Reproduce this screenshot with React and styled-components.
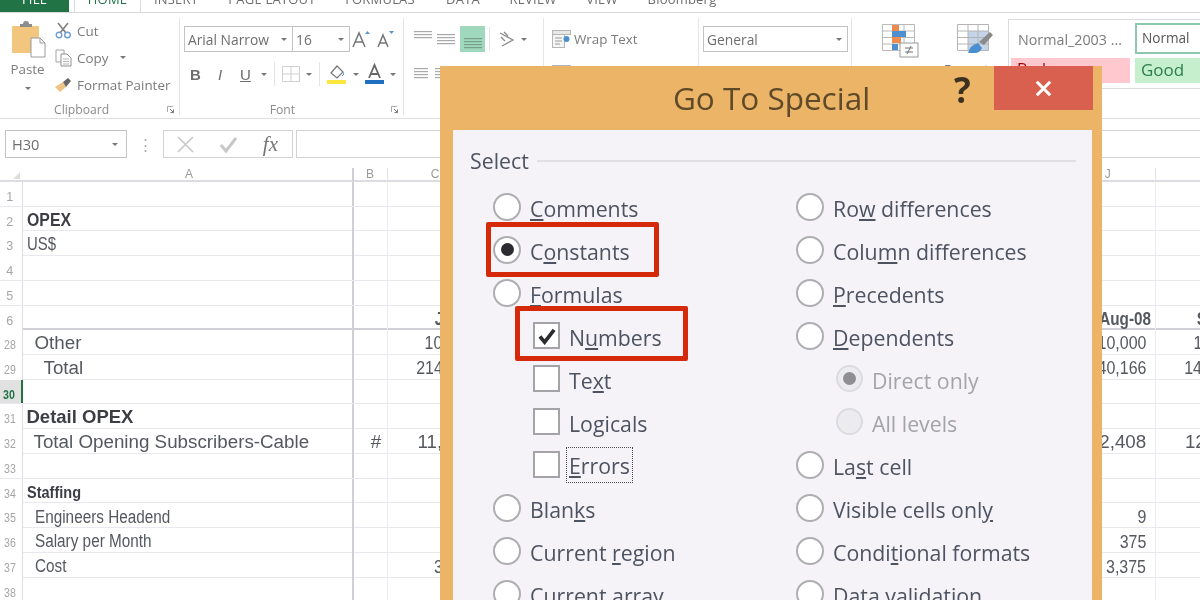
import styled, { createGlobalStyle } from 'styled-components';

const GlobalStyle = createGlobalStyle`
  html, body { margin: 0; padding: 0; background: #fff; }
  * { box-sizing: border-box; }
`;

const UI_FONT = '"Open Sans", "Noto Sans", sans-serif';
const SHEET_FONT = '"Liberation Sans", Arial, sans-serif';

const Page = styled.div`
  position: relative;
  width: 1200px;
  height: 600px;
  overflow: hidden;
  background: #fff;
  font-family: ${UI_FONT};
  filter: blur(0.55px);
`;

/* ---------- tabs ---------- */
const TabStrip = styled.div`
  display: flex;
  height: 13px;
  border-bottom: 1px solid #d9d9dc;
  overflow: hidden;
  font-size: 13px;
  letter-spacing: 0.2px;
  color: #6d6d6d;
`;
const FileTab = styled.div`
  width: 69px;
  height: 17px;
  margin: -5px 5px 0 0;
  background: #217346;
  color: #fff;
  text-align: center;
  line-height: 8px;
  flex: none;
`;
const Tab = styled.div`
  width: ${p => p.$w}px;
  flex: none;
  height: 18px;
  margin-top: -5px;
  text-align: center;
  line-height: 8px;
  white-space: nowrap;
  color: ${p => (p.$active ? '#217346' : 'inherit')};
  background: #fff;
  ${p => p.$active && 'border: 1px solid #d9d9dc; border-top: 0; border-bottom: 0;'}
`;

/* ---------- ribbon ---------- */
const Ribbon = styled.div`
  display: flex;
  height: 106px;
  border-bottom: 1px solid #dedee2;
  color: #7b7b7b;
  font-size: 13.4px;
`;
const Group = styled.div`
  width: ${p => p.$w}px;
  flex: none;
  display: flex;
  flex-direction: column;
  position: relative;
  padding: ${p => p.$pad || '0'};
  &:after {
    content: '';
    display: ${p => (p.$noLine ? 'none' : 'block')};
    position: absolute;
    right: 0;
    top: 5px;
    bottom: 3px;
    width: 1px;
    background: #e6e6ea;
  }
`;
const GroupBody = styled.div`
  flex: 1;
  display: flex;
  min-height: 0;
`;
const GroupLabel = styled.div`
  height: 18px;
  display: grid;
  grid-template-columns: 1fr auto 1.2fr;
  align-items: center;
  font-size: 12.2px;
  color: #8c8c8c;
  padding-right: 6px;
  span { grid-column: 2; }
  svg { grid-column: 3; justify-self: end; }
`;
const PasteCol = styled.div`
  width: 55px;
  padding-top: 8px;
  display: flex;
  flex-direction: column;
  align-items: center;
  line-height: 18px;
  svg { margin-bottom: 1px; }
`;
const SmallCol = styled.div`
  display: flex;
  flex-direction: column;
  padding-top: 4px;
`;
const SmallItem = styled.div`
  height: ${p => p.$h || 27}px;
  display: flex;
  align-items: center;
  gap: ${p => p.$gap || 5}px;
  white-space: nowrap;
`;
const Stack = styled.div`
  display: flex;
  flex-direction: column;
  padding-top: 13px;
  gap: 10px;
`;
const ToolRow = styled.div`
  display: flex;
  align-items: center;
  height: ${p => p.$h || 26}px;
`;
const Tool = styled.div`
  width: ${p => p.$w}px;
  height: ${p => p.$h || 24}px;
  flex: none;
  display: flex;
  align-items: center;
  justify-content: center;
  margin-left: ${p => p.$ml || 0}px;
  background: ${p => (p.$on ? '#9fd8bd' : 'transparent')};
  color: #6d6d6d;
  font-family: ${SHEET_FONT};
  font-size: 15px;
  font-weight: ${p => (p.$bold ? 700 : 400)};
  font-style: ${p => (p.$italic ? 'italic' : 'normal')};
  text-decoration: ${p => (p.$under ? 'underline' : 'none')};
`;
const Caret = styled.i`
  display: block;
  width: 0;
  height: 0;
  margin-top: ${p => p.$mt || 0}px;
  margin-left: ${p => p.$ml || 0}px;
  border-left: 3px solid transparent;
  border-right: 3px solid transparent;
  border-top: 3px solid #777;
`;
const Sep = styled.div`
  width: 1px;
  height: 24px;
  background: #e4e4e8;
  flex: none;
  margin: 0 ${p => p.$m || 6}px;
`;
const Combo = styled.div`
  width: ${p => p.$w}px;
  height: 26px;
  flex: none;
  border: 1px solid #c3c3c7;
  background: #fff;
  display: flex;
  align-items: center;
  justify-content: space-between;
  padding: 0 5px 0 3px;
  font-size: 13.8px;
  color: #6e6e6e;
  & + & { margin-left: -1px; }
`;
const BigTool = styled.div`
  width: ${p => p.$w}px;
  flex: none;
  display: flex;
  flex-direction: column;
  align-items: center;
  padding-top: 11px;
  gap: 6px;
  white-space: nowrap;
`;
const Gallery = styled.div`
  width: 210px;
  flex: none;
  height: 70px;
  margin-top: 6px;
  border: 1px solid #dcdce0;
  border-right: 0;
  display: grid;
  grid-template-columns: 124px 86px;
  grid-template-rows: 35px 25px;
  padding: 3px 0 0 2px;
`;
const StyleCell = styled.div`
  display: flex;
  align-items: center;
  padding: 0 0 ${p => (p.$boxed ? 2 : 3)}px ${p => p.$pl || 6}px;
  font-size: ${p => p.$fs || 14.3}px;
  margin-right: 5px;
  background: ${p => p.$bg || 'transparent'};
  color: ${p => p.$color || '#7b7b7b'};
  border: ${p => (p.$boxed ? '2px solid #8fc7ae' : '0')};
  margin-bottom: ${p => (p.$boxed ? '4px' : '0')};
  white-space: nowrap;
`;

/* ---------- formula bar ---------- */
const FormulaBar = styled.div`
  display: flex;
  align-items: center;
  height: 28px;
  margin-top: 11px;
  padding-left: 5px;
`;
const NameBox = styled(Combo)`
  width: 122px;
  height: 28px;
  padding: 0 8px 0 6px;
  font-size: 14.6px;
`;
const Dots = styled.div`
  width: 36px;
  text-align: center;
  color: #a9a9a9;
  font-size: 15px;
  line-height: 1;
  flex: none;
`;
const FxBox = styled.div`
  width: 130px;
  height: 28px;
  flex: none;
  border: 1px solid #d3d3d7;
  display: flex;
  align-items: center;
  justify-content: space-between;
  padding: 0 14px 0 12px;
`;
const FxText = styled.span`
  font-family: "Liberation Serif", serif;
  font-style: italic;
  font-size: 21px;
  color: #757575;
`;
const FormulaInput = styled.div`
  flex: 1;
  height: 28px;
  margin-left: 3px;
  border: 1px solid #d3d3d7;
  border-right: 0;
`;

/* ---------- sheet ---------- */
const Sheet = styled.div`
  margin-top: 10px;
`;
const COLUMNS = '22.5px 331px 34px repeat(9, 96.1px)';
const ColHeader = styled.div`
  display: grid;
  grid-template-columns: ${COLUMNS};
  height: 14px;
  border-bottom: 2px solid #dcdce2;
  font-size: 12px;
  line-height: 13px;
  color: #9a9a9a;
  font-family: ${SHEET_FONT};
`;
const ColName = styled.div`
  text-align: center;
  padding-left: ${p => (p.$strong ? 4 : 0)}px;
  border-right: 1px solid ${p => (p.$strong ? '#cfcfd6' : '#e4e4ea')};
  ${p => p.$strong && 'border-right-width: 2px;'}
`;
const Row = styled.div`
  display: grid;
  grid-template-columns: ${COLUMNS};
  height: 24.72px;
  border-bottom: ${p => (p.$frozen ? '2px solid #cfcfd5' : '1px solid #e8e8ee')};
`;
const RowNo = styled.div`
  font-family: ${SHEET_FONT};
  font-size: 12.5px;
  color: ${p => (p.$sel ? '#217346' : '#a6a6a6')};
  font-weight: ${p => (p.$sel ? 700 : 400)};
  background: ${p => (p.$sel ? '#e1e1e1' : '#fff')};
  border-right: ${p => (p.$sel ? '2px solid #217346' : '1px solid #dcdce2')};
  text-align: center;
  padding-right: 2px;
  line-height: 31px;
  overflow: hidden;
`;
const Cell = styled.div`
  font-family: ${SHEET_FONT};
  font-size: ${p => p.$fs || 18.8}px;
  font-weight: ${p => (p.$bold ? 700 : 400)};
  color: ${p => p.$color || '#55585f'};
  text-align: ${p => p.$align || 'left'};
  padding: 0 ${p => p.$pr || 0}px 0 ${p => p.$pl || 0}px;
  white-space: nowrap;
  line-height: ${p => p.$lh || 27}px;
  border-right: 1px solid ${p => (p.$strong ? '#cfcfd6' : '#ebebf1')};
  ${p => p.$strong && 'border-right-width: 2px;'}
`;
/* the sheet uses Arial Narrow, which is not installed: squeeze the Arial metrics */
const Narrow = styled.span`
  display: inline-block;
  transform: scaleX(${p => p.$sx || 0.85});
  transform-origin: ${p => p.$origin || 'left'} center;
`;

/* ---------- dialog ---------- */
const Dialog = styled.div`
  position: absolute;
  left: 440px;
  top: 66px;
  width: 662px;
  height: 600px;
  background: #ecb466;
  padding: 64px 10px 0 13px;
`;
const TitleBar = styled.div`
  position: absolute;
  left: 0;
  right: 0;
  top: 0;
  height: 64px;
  text-align: center;
  padding-left: 1px;
  font-size: 31.5px;
  line-height: 63px;
  color: #5e4a29;
`;
const HelpMark = styled.div`
  position: absolute;
  left: 514px;
  top: 3px;
  font-size: 35px;
  line-height: 42px;
  font-weight: 700;
  color: #3c3020;
`;
const CloseBtn = styled.div`
  position: absolute;
  left: 554px;
  top: 0;
  width: 99px;
  height: 44px;
  background: #d9604f;
  display: flex;
  align-items: center;
  justify-content: center;
`;
const Panel = styled.div`
  height: 100%;
  background: #f5f3f8;
  padding: 16px 16px 0 17px;
  color: #4e5361;
  font-size: 21.3px;
`;
const Legend = styled.div`
  display: flex;
  align-items: center;
  gap: 8px;
  line-height: 30px;
  &:after {
    content: '';
    flex: 1;
    height: 2px;
    background: #e0dfe4;
  }
`;
const Columns = styled.div`
  display: grid;
  grid-template-columns: 303px 1fr;
  padding: 9px 0 0 23px;
`;
const Option = styled.div`
  position: relative;
  display: flex;
  align-items: center;
  height: 43px;
  padding-left: ${p => (p.$indent ? 40 : 0)}px;
  gap: 9px;
  white-space: nowrap;
  color: ${p => (p.$off ? '#a3a4a8' : 'inherit')};
  span:last-of-type { padding-top: 3px; }
  u { text-underline-offset: 2px; text-decoration-thickness: 2px; }
`;
const Radio = styled.i`
  width: ${p => (p.$off ? 27 : 28)}px;
  height: ${p => (p.$off ? 27 : 28)}px;
  flex: none;
  border-radius: 50%;
  border: 2px solid ${p => (p.$off ? '#dcdcdf' : '#aeaeb2')};
  background: ${p => (p.$off ? '#ececee' : '#fff')};
  display: flex;
  align-items: center;
  justify-content: center;
  &:after {
    content: '';
    display: ${p => (p.$checked ? 'block' : 'none')};
    width: 13px;
    height: 13px;
    border-radius: 50%;
    background: ${p => (p.$off ? '#8f8f93' : '#2b2b30')};
  }
`;
const Check = styled.i`
  width: 27px;
  height: 27px;
  flex: none;
  border: 2px solid #a3a3a8;
  background: #fff;
  display: flex;
  align-items: center;
  justify-content: center;
`;
const Focus = styled.span`
  outline: 1.5px dotted #4a4a52;
  padding: 2px 2px 2px 2px;
  margin-left: -2px;
  line-height: 29px;
`;
const Mark = styled.div`
  position: absolute;
  left: ${p => p.$l}px;
  top: ${p => p.$t}px;
  width: 173px;
  height: 55px;
  border: 5px solid #d42a0a;
  border-radius: 2px;
`;

/* ---------- drawn icons ---------- */
const PasteIcon = () => (
  <svg width="36" height="38" viewBox="0 0 36 38">
    <rect x="2" y="5" width="27" height="27" rx="1" fill="#f2c67f" />
    <path d="M10 6 V3 H13 A3 3 0 0 1 19 3 H22 V6 Z" fill="#8c8c8c" />
    <path d="M21 17 H30 L35 22 V36 H21 Z" fill="#fff" stroke="#9b9b9b" />
    <path d="M30 17 V22 H35" fill="none" stroke="#9b9b9b" />
  </svg>
);
const ScissorsIcon = () => (
  <svg width="17" height="17" viewBox="0 0 17 17">
    <path d="M3 1 L11 11 M13 1 L5 11" stroke="#808080" strokeWidth="1.6" fill="none" />
    <circle cx="4" cy="13" r="2.8" fill="none" stroke="#6f9ed0" strokeWidth="1.4" />
    <circle cx="12.5" cy="13" r="2.8" fill="none" stroke="#6f9ed0" strokeWidth="1.4" />
  </svg>
);
const CopyIcon = () => (
  <svg width="17" height="18" viewBox="0 0 17 18">
    <path d="M1 1 H9 V13 H1 Z" fill="#fff" stroke="#a5a5a5" />
    <path d="M6 5 H12 L16 9 V17 H6 Z" fill="#fff" stroke="#909090" />
    <path d="M8 10 H14 M8 12.5 H14 M8 15 H14" stroke="#b5b5b5" />
  </svg>
);
const PainterIcon = () => (
  <svg width="17" height="16" viewBox="0 0 17 16">
    <path d="M0 10 L8 5 L11 10 L5 15 Z" fill="#edc386" />
    <path d="M8 5 L13 1 L16 4 L11 10 Z" fill="#666" />
  </svg>
);
const SizeIcon = ({ size, dir }) => (
  <svg width="24" height="22" viewBox="0 0 24 22">
    <path d={size === 'big'
      ? 'M3 19 L9 5 L15 19 M5.5 14 H12.5'
      : 'M4 19 L9 7 L14 19 M6 15 H12'} fill="none" stroke="#767676" strokeWidth="1.5" />
    <path d={dir === 'up' ? 'M15 6 L17.5 3 L20 6 Z' : 'M15 3 L17.5 6 L20 3 Z'} fill="#5b94cf" />
  </svg>
);
const BorderIcon = () => (
  <svg width="18" height="16" viewBox="0 0 18 16">
    <path d="M.5.5 H17.5 V15.5 H.5 Z M9 .5 V15.5 M.5 8 H17.5" fill="none" stroke="#cfcfcf" />
  </svg>
);
const FillIcon = () => (
  <svg width="21" height="22" viewBox="0 0 21 22">
    <path d="M5 10 L11 3 L17 9 L11 15 Z" fill="#fff" stroke="#777" strokeWidth="1.2" />
    <path d="M16 8 L18 11 L16 13" fill="none" stroke="#5b94cf" />
    <rect x="1" y="17" width="19" height="4" fill="#fbe83f" />
  </svg>
);
const FontColorIcon = () => (
  <svg width="20" height="22" viewBox="0 0 20 22">
    <path d="M4 15 L9.5 2 L15 15 M6 11 H13" fill="none" stroke="#676767" strokeWidth="1.8" />
    <rect x="0" y="17" width="19" height="4" fill="#1f6fc0" />
  </svg>
);
const Lines = ({ w = 18, y, color = '#a9a9a9', ys = [0, 3, 6, 9] }) => (
  <svg width={w} height="22" viewBox={`0 0 ${w} 22`}>
    {ys.map(d => <rect key={d} x="0" y={y + d} width={w} height="1.2" fill={color} />)}
  </svg>
);
const OrientIcon = () => (
  <svg width="19" height="17" viewBox="0 0 19 17">
    <path d="M2 2 L15 9 L4 15 M6 1 L10 5 M3 6 L7 10" fill="none" stroke="#8a8a8a" strokeWidth="1.3" />
  </svg>
);
const WrapIcon = () => (
  <svg width="20" height="18" viewBox="0 0 20 18">
    <rect x=".5" y=".5" width="12" height="17" fill="#f6f6f6" stroke="#b5b5b5" />
    <rect x=".5" y=".5" width="18" height="4" fill="#e8e8e8" stroke="#b5b5b5" />
    <path d="M3 8 H10 M3 11 H10 M3 14 H8" stroke="#9a9a9a" />
    <circle cx="14.5" cy="9" r="3" fill="#4a90d0" />
  </svg>
);
const CondIcon = () => (
  <svg width="37" height="34" viewBox="0 0 37 34">
    <path d="M.5.5 H32.5 V26.5 H.5 Z M11 .5 V26.5 M22 .5 V26.5 M.5 7 H32.5 M.5 13.5 H32.5 M.5 20 H32.5" fill="#fff" stroke="#b9b9b9" />
    <rect x="10" y="1" width="7" height="6" fill="#ee8a4b" />
    <rect x="10" y="7" width="14" height="6" fill="#4d8fd0" />
    <rect x="10" y="13" width="9" height="6" fill="#ee8a4b" />
    <rect x="10" y="20" width="6" height="6" fill="#4d8fd0" />
    <rect x="18" y="19" width="18" height="14" fill="#fff" stroke="#9a9a9a" />
    <path d="M23 24 H31 M23 28 H31 M29 22 L25 30" stroke="#707070" fill="none" />
  </svg>
);
const TableIcon = () => (
  <svg width="37" height="30" viewBox="0 0 37 30">
    <path d="M.5.5 H31.5 V26.5 H.5 Z" fill="#fff" stroke="#b4b4b4" />
    <rect x="11" y="7" width="20" height="19" fill="#c4d5ea" />
    <path d="M11 .5 V26.5 M21 .5 V26.5 M.5 7 H31.5 M.5 13.5 H31.5 M.5 20 H31.5" stroke="#b4b4b4" fill="none" />
    <path d="M22 18 L33 8 L36 11 L27 21 Z" fill="#8a8a8a" />
    <path d="M11 29 Q13 21 21 19 L25 24 Q23 29 18 29 Z" fill="#4a90d0" />
  </svg>
);
const Launcher = () => (
  <svg width="7" height="7" viewBox="0 0 7 7">
    <path d="M.5 6 V.5 H6" fill="none" stroke="#aaa" />
    <path d="M3 3 L6.5 6.5 M6.5 3.5 V6.5 H3.5" fill="none" stroke="#777" />
  </svg>
);
const CrossIcon = ({ size = 19, color = '#c8c8c8', width = 1.6 }) => (
  <svg width={size} height={size} viewBox="0 0 19 19">
    <path d="M2 2 L17 17 M17 2 L2 17" stroke={color} strokeWidth={width} fill="none" />
  </svg>
);
const CheckIcon = ({ size = 19, color = '#c8c8c8', width = 3 }) => (
  <svg width={size} height={size} viewBox="0 0 19 19">
    <path d="M2 10 L7 16 L17 3" stroke={color} strokeWidth={width} fill="none" />
  </svg>
);
const CornerMark = styled.svg`
  display: block;
  margin: 4px 0 0 13px;
`;

/* ---------- data ---------- */
const TABS = [
  ['INSERT', 70], ['PAGE LAYOUT', 122], ['FORMULAS', 94], ['DATA', 72],
  ['REVIEW', 68], ['VIEW', 70], ['Bloomberg', 90],
];

const ROWS = [
  { n: '1' },
  { n: '2', a: 'OPEX', bold: true, narrow: 0.88, fs: 18, lh: 26, pl: 4 },
  { n: '3', a: 'US$', narrow: 0.83, fs: 18, pl: 4 },
  { n: '4' },
  { n: '5' },
  { n: '6', frozen: true, head: true, c: 'Jul-08', j: 'Aug-08', k: 'Sep-08' },
  { n: '28', a: 'Other', pl: 12, lh: 25.5, squeeze: true, c: '10,000', j: '10,000', k: '10,000' },
  { n: '29', a: 'Total', pl: 21, lh: 25.5, squeeze: true, c: '214,166', j: '40,166', k: '140,166' },
  { n: '30', sel: true },
  { n: '31', a: 'Detail OPEX', bold: true, fs: 18.5, lh: 25, pl: 4 },
  { n: '32', a: 'Total Opening Subscribers-Cable', pl: 11, lh: 26, b: '#', c: '11,408', j: '12,408', k: '12,408' },
  { n: '33' },
  { n: '34', a: 'Staffing', bold: true, narrow: 0.88, fs: 16.5, pl: 4 },
  { n: '35', a: 'Engineers Headend', narrow: 0.85, fs: 18, lh: 28, pl: 12, squeeze: true, j: '9' },
  { n: '36', a: 'Salary per Month', narrow: 0.85, fs: 18, pl: 12, squeeze: true, j: '375' },
  { n: '37', a: 'Cost', narrow: 0.85, fs: 18, pl: 12, squeeze: true, c: '3,375', j: '3,375' },
  { n: '38' },
];

const Amount = ({ row, value }) => (
  <Cell $align="right" $bold={row.head} $pr={row.head ? 4 : 9} $lh={row.lh} $fs={row.head ? 18 : undefined}>
    {value && (row.squeeze || row.head
      ? <Narrow $origin="right">{value}</Narrow>
      : value)}
  </Cell>
);

const Rows = () => ROWS.map(r => (
  <Row key={r.n} $frozen={r.frozen}>
    <RowNo $sel={r.sel}><Narrow $origin="center" $sx={r.n.length > 1 ? 0.85 : 1}>{r.n}</Narrow></RowNo>
    <Cell $strong $bold={r.bold} $pl={r.pl} $fs={r.fs} $lh={r.lh} $color={r.bold ? '#3c3e44' : undefined}>
      {r.narrow ? <Narrow $sx={r.narrow}>{r.a}</Narrow> : r.a}
    </Cell>
    <Cell $align="center" $pl={12} $lh={r.lh}>{r.b}</Cell>
    <Amount row={r} value={r.c} />
    <Cell /><Cell /><Cell /><Cell /><Cell /><Cell />
    <Amount row={r} value={r.j} />
    <Amount row={r} value={r.k} />
  </Row>
));

const COLS = ['A', 'B', 'C', 'D', 'E', 'F', 'G', 'H', 'I', 'J', 'K'];

export default function App() {
  return (
    <Page>
      <GlobalStyle />
      <TabStrip>
        <FileTab>FILE</FileTab>
        <Tab $active $w={67}>HOME</Tab>
        {TABS.map(([t, w]) => <Tab key={t} $w={w}>{t}</Tab>)}
      </TabStrip>

      <Ribbon>
        <Group $w={180}>
          <GroupBody>
            <PasteCol>
              <PasteIcon />
              Paste
              <Caret $mt={9} />
            </PasteCol>
            <SmallCol>
              <SmallItem><ScissorsIcon />Cut</SmallItem>
              <SmallItem><CopyIcon />Copy<Caret $ml={7} /></SmallItem>
              <SmallItem><PainterIcon />Format Painter</SmallItem>
            </SmallCol>
          </GroupBody>
          <GroupLabel><span>Clipboard</span><Launcher /></GroupLabel>
        </Group>

        <Group $w={224} $pad="0 0 0 4px">
          <GroupBody>
            <Stack>
              <ToolRow>
                <Combo $w={109}>Arial Narrow<Caret /></Combo>
                <Combo $w={58}>16<Caret /></Combo>
                <Tool $w={24} $h={26}><SizeIcon size="big" dir="up" /></Tool>
                <Tool $w={24} $h={26}><SizeIcon size="small" dir="down" /></Tool>
              </ToolRow>
              <ToolRow $h={24}>
                <Tool $w={23} $bold>B</Tool>
                <Tool $w={26} $italic>I</Tool>
                <Tool $w={25} $under>U</Tool>
                <Tool $w={12}><Caret /></Tool>
                <Sep $m={4} />
                <Tool $w={24}><BorderIcon /></Tool>
                <Tool $w={12}><Caret /></Tool>
                <Sep $m={4} />
                <Tool $w={24}><FillIcon /></Tool>
                <Tool $w={15}><Caret /></Tool>
                <Tool $w={24}><FontColorIcon /></Tool>
                <Tool $w={11}><Caret /></Tool>
              </ToolRow>
            </Stack>
          </GroupBody>
          <GroupLabel><span>Font</span><Launcher /></GroupLabel>
        </Group>

        <Group $w={140} $pad="0 0 0 7px">
          <GroupBody>
            <Stack>
              <ToolRow>
                <Tool $w={23} $h={26}><Lines y={3} ys={[0, 3, 6]} /></Tool>
                <Tool $w={23} $h={26}><Lines y={6} /></Tool>
                <Tool $w={25} $h={26} $ml={3} $on><Lines y={10} color="#76a08a" /></Tool>
                <Sep $m={4} />
                <Tool $w={26} $h={26}><OrientIcon /></Tool>
                <Tool $w={8} $h={26}><Caret /></Tool>
              </ToolRow>
              <ToolRow $h={24}>
                <Tool $w={19}><Lines w={14} y={5} /></Tool>
                <Tool $w={23}><Lines w={14} y={5} /></Tool>
              </ToolRow>
            </Stack>
          </GroupBody>
        </Group>

        <Group $w={155} $pad="0 0 0 8px">
          <GroupBody>
            <Stack>
              <SmallItem $h={26} $gap={2}><WrapIcon />Wrap Text</SmallItem>
              <SmallItem $h={24} $gap={2}><WrapIcon />Merge &amp; Center</SmallItem>
            </Stack>
          </GroupBody>
        </Group>

        <Group $w={153} $pad="0 0 0 4px">
          <GroupBody>
            <Stack>
              <Combo $w={145}>General<Caret /></Combo>
            </Stack>
          </GroupBody>
        </Group>

        <Group $w={156} $noLine $pad="0 0 0 10px">
          <GroupBody>
            <BigTool $w={76}><CondIcon />Conditional</BigTool>
            <BigTool $w={74}><TableIcon />Format as</BigTool>
          </GroupBody>
        </Group>

        <Gallery>
          <StyleCell $pl={7}>Normal_2003 ...</StyleCell>
          <StyleCell $boxed $pl={5} $fs={13.6} $color="#555">Normal</StyleCell>
          <StyleCell $bg="#ffc7ce" $color="#9c0006" $fs={16}>Bad</StyleCell>
          <StyleCell $bg="#c6efce" $color="#2a7d4f" $fs={17}>Good</StyleCell>
        </Gallery>
      </Ribbon>

      <FormulaBar>
        <NameBox>H30<Caret /></NameBox>
        <Dots>⋮</Dots>
        <FxBox>
          <CrossIcon />
          <CheckIcon />
          <FxText>fx</FxText>
        </FxBox>
        <FormulaInput />
      </FormulaBar>

      <Sheet>
        <ColHeader>
          <div>
            <CornerMark width="7" height="7" viewBox="0 0 7 7"><path d="M7 0 V7 H0 Z" fill="#dedede" /></CornerMark>
          </div>
          {COLS.map(c => <ColName key={c} $strong={c === 'A'}>{c}</ColName>)}
        </ColHeader>
        <Rows />
      </Sheet>

      <Dialog>
        <TitleBar>Go To Special</TitleBar>
        <HelpMark>?</HelpMark>
        <CloseBtn><CrossIcon size={17} color="#fff" width={3.4} /></CloseBtn>
        <Panel>
          <Legend>Select</Legend>
          <Columns>
            <div>
              <Option><Radio /><span><u>C</u>omments</span></Option>
              <Option>
                <Radio $checked /><span>C<u>o</u>nstants</span>
                <Mark $l={-7} $t={-6} />
              </Option>
              <Option><Radio /><span><u>F</u>ormulas</span></Option>
              <Option $indent>
                <Check><CheckIcon size={18} color="#2b2b30" width={3.8} /></Check>
                <span>N<u>u</u>mbers</span>
                <Mark $l={22} $t={-8} />
              </Option>
              <Option $indent><Check /><span>Te<u>x</u>t</span></Option>
              <Option $indent><Check /><span>Lo<u>g</u>icals</span></Option>
              <Option $indent><Check /><Focus><u>E</u>rrors</Focus></Option>
              <Option><Radio /><span>Blan<u>k</u>s</span></Option>
              <Option><Radio /><span>Current <u>r</u>egion</span></Option>
              <Option><Radio /><span>Current <u>a</u>rray</span></Option>
            </div>
            <div>
              <Option><Radio /><span>Ro<u>w</u> differences</span></Option>
              <Option><Radio /><span>Colu<u>m</u>n differences</span></Option>
              <Option><Radio /><span><u>P</u>recedents</span></Option>
              <Option><Radio /><span><u>D</u>ependents</span></Option>
              <Option $indent $off><Radio $off $checked /><span>Direct only</span></Option>
              <Option $indent $off><Radio $off /><span>All levels</span></Option>
              <Option><Radio /><span>La<u>s</u>t cell</span></Option>
              <Option><Radio /><span>Visible cells onl<u>y</u></span></Option>
              <Option><Radio /><span>Condi<u>t</u>ional formats</span></Option>
              <Option><Radio /><span>Data <u>v</u>alidation</span></Option>
            </div>
          </Columns>
        </Panel>
      </Dialog>
    </Page>
  );
}
